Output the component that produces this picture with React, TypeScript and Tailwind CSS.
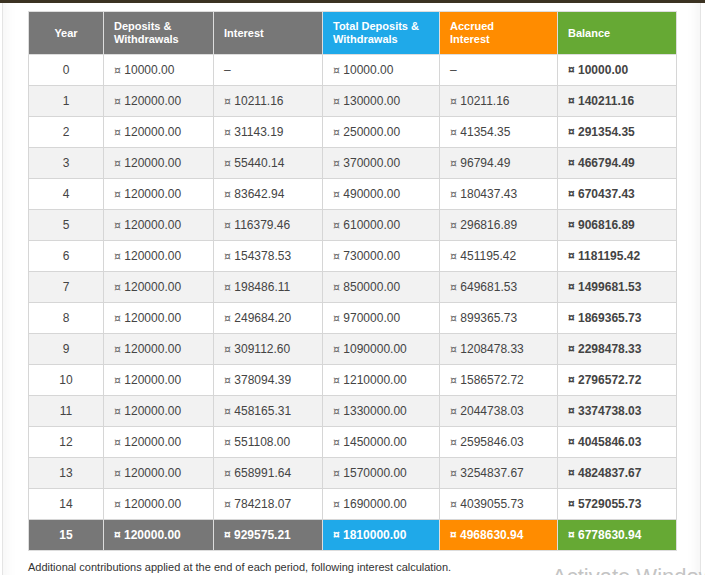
const rows: [number, string, string, string, string, string][] = [
  [0, '10000.00', '', '10000.00', '', '10000.00'],
  [1, '120000.00', '10211.16', '130000.00', '10211.16', '140211.16'],
  [2, '120000.00', '31143.19', '250000.00', '41354.35', '291354.35'],
  [3, '120000.00', '55440.14', '370000.00', '96794.49', '466794.49'],
  [4, '120000.00', '83642.94', '490000.00', '180437.43', '670437.43'],
  [5, '120000.00', '116379.46', '610000.00', '296816.89', '906816.89'],
  [6, '120000.00', '154378.53', '730000.00', '451195.42', '1181195.42'],
  [7, '120000.00', '198486.11', '850000.00', '649681.53', '1499681.53'],
  [8, '120000.00', '249684.20', '970000.00', '899365.73', '1869365.73'],
  [9, '120000.00', '309112.60', '1090000.00', '1208478.33', '2298478.33'],
  [10, '120000.00', '378094.39', '1210000.00', '1586572.72', '2796572.72'],
  [11, '120000.00', '458165.31', '1330000.00', '2044738.03', '3374738.03'],
  [12, '120000.00', '551108.00', '1450000.00', '2595846.03', '4045846.03'],
  [13, '120000.00', '658991.64', '1570000.00', '3254837.67', '4824837.67'],
  [14, '120000.00', '784218.07', '1690000.00', '4039055.73', '5729055.73'],
];

const total = ['120000.00', '929575.21', '1810000.00', '4968630.94', '6778630.94'];

// regular cells show a thin little ¤, bold cells keep the boxy one
function Money({ v, bold }: { v: string; bold?: boolean }) {
  if (!v) return <>–</>;
  if (bold) return <>¤ {v}</>;
  return (
    <>
      <span className="font-['DejaVu_Sans',sans-serif] text-[11px] text-[#666]">¤</span> {v}
    </>
  );
}

export default function App() {
  return (
    <div className="relative w-[705px] h-[575px] overflow-hidden bg-white font-['Liberation_Sans',Arial,sans-serif]">
      <div className="h-[3px] bg-[#3b3222]" />
      <div className="ml-[2px] w-[699px] h-full border-l border-r border-[#e4e4e4] pl-[25px] pt-[8px] shadow-[inset_14px_0_14px_-12px_rgba(0,0,0,0.05),inset_-14px_0_14px_-12px_rgba(0,0,0,0.06)]">
        <table className="table-fixed border-collapse w-[648px] border border-[#cccccc] text-[12px] text-[#444]">
          <colgroup>
            <col className="w-[75px]" />
            <col className="w-[110px]" />
            <col className="w-[109px]" />
            <col className="w-[117px]" />
            <col className="w-[118px]" />
            <col className="w-[119px]" />
          </colgroup>
          <thead>
            <tr className="h-[43px] text-[11px] font-bold text-white leading-[13px]">
              <th className="bg-[#777777] border border-[#dddddd] text-center align-middle">Year</th>
              <th className="bg-[#777777] border border-[#dddddd] text-left px-[10px] align-middle">Deposits &amp;<br />Withdrawals</th>
              <th className="bg-[#777777] border border-[#dddddd] text-left px-[10px] align-middle">Interest</th>
              <th className="bg-[#1fa9e9] border border-[#dddddd] text-left px-[10px] align-middle">Total Deposits &amp;<br />Withdrawals</th>
              <th className="bg-[#ff8c00] border border-[#dddddd] text-left px-[10px] align-middle">Accrued<br />Interest</th>
              <th className="bg-[#66a934] border border-[#dddddd] text-left px-[10px] align-middle">Balance</th>
            </tr>
          </thead>
          <tbody>
            {rows.map((r) => (
              <tr key={r[0]} className={`h-[31px] ${r[0] % 2 === 1 ? 'bg-[#f2f2f2]' : 'bg-white'}`}>
                <td className="border border-[#d6d6d6] text-center">{r[0]}</td>
                <td className="border border-[#d6d6d6] px-[10px]"><Money v={r[1]} /></td>
                <td className="border border-[#d6d6d6] px-[10px]"><Money v={r[2]} /></td>
                <td className="border border-[#d6d6d6] px-[10px]"><Money v={r[3]} /></td>
                <td className="border border-[#d6d6d6] px-[10px]"><Money v={r[4]} /></td>
                <td className="border border-[#d6d6d6] px-[10px] font-bold"><Money v={r[5]} bold /></td>
              </tr>
            ))}
            <tr className="h-[31px] font-bold text-white">
              <td className="bg-[#777777] border border-[#dddddd] text-center">15</td>
              <td className="bg-[#777777] border border-[#dddddd] px-[10px]"><Money v={total[0]} bold /></td>
              <td className="bg-[#777777] border border-[#dddddd] px-[10px]"><Money v={total[1]} bold /></td>
              <td className="bg-[#1fa9e9] border border-[#dddddd] px-[10px]"><Money v={total[2]} bold /></td>
              <td className="bg-[#ff8c00] border border-[#dddddd] px-[10px]"><Money v={total[3]} bold /></td>
              <td className="bg-[#66a934] border border-[#dddddd] px-[10px]"><Money v={total[4]} bold /></td>
            </tr>
          </tbody>
        </table>
        <p className="mt-[8px] text-[11px] text-[#333]">
          Additional contributions applied at the end of each period, following interest calculation.
        </p>
      </div>
      <div className="absolute left-[552px] top-[566px] text-[22px] leading-none whitespace-nowrap text-[#c4c4c4]">
        Activate Windows
      </div>
    </div>
  );
}
